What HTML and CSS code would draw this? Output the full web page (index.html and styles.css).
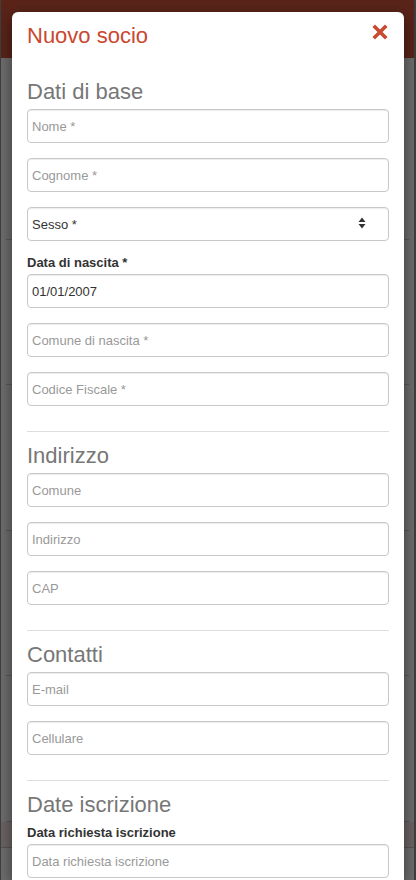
FILE: index.html
```html
<!DOCTYPE html>
<html lang="it">
<head>
<meta charset="utf-8">
<title>Nuovo socio</title>
<link rel="stylesheet" href="styles.css">
</head>
<body>
<div class="page">
  <div class="page-header"></div>
  <div class="bg-row bg-row-1"></div>
  <div class="bg-row bg-row-2"></div>
  <div class="bg-row bg-row-3"></div>
  <div class="bg-row bg-row-2"></div>
  <div class="bg-row bg-row-3"></div>
  <div class="bg-row bg-row-brown"></div>
</div>

<div class="modal">
  <div class="modal-header">
    <h4 class="modal-title">Nuovo socio</h4>
    <button class="close" type="button" aria-label="Chiudi">
      <svg width="16" height="16" viewBox="0 0 16 16" aria-hidden="true">
        <path d="M3 3 L13 13 M13 3 L3 13" stroke="#c94a33" stroke-width="3.6" stroke-linecap="square" fill="none"/>
      </svg>
    </button>
  </div>
  <div class="modal-body">
    <h3 class="section-title">Dati di base</h3>
    <div class="form-group"><input class="form-control" type="text" placeholder="Nome *"></div>
    <div class="form-group"><input class="form-control" type="text" placeholder="Cognome *"></div>
    <div class="form-group">
      <div class="select-wrap">
        <select class="form-control select">
          <option>Sesso *</option>
          <option>M</option>
          <option>F</option>
        </select>
        <svg class="select-arrow" width="8" height="12" viewBox="0 0 8 12" aria-hidden="true">
          <path d="M0.5 5 L4 0.5 L7.5 5 Z M0.5 7 L7.5 7 L4 11.5 Z" fill="#333"/>
        </svg>
      </div>
    </div>
    <div class="form-group">
      <label class="control-label">Data di nascita *</label>
      <input class="form-control" type="text" value="01/01/2007">
    </div>
    <div class="form-group"><input class="form-control" type="text" placeholder="Comune di nascita *"></div>
    <div class="form-group"><input class="form-control" type="text" placeholder="Codice Fiscale *"></div>

    <hr class="divider">
    <h3 class="section-title">Indirizzo</h3>
    <div class="form-group"><input class="form-control" type="text" placeholder="Comune"></div>
    <div class="form-group"><input class="form-control" type="text" placeholder="Indirizzo"></div>
    <div class="form-group"><input class="form-control" type="text" placeholder="CAP"></div>

    <hr class="divider">
    <h3 class="section-title">Contatti</h3>
    <div class="form-group"><input class="form-control" type="text" placeholder="E-mail"></div>
    <div class="form-group"><input class="form-control" type="text" placeholder="Cellulare"></div>

    <hr class="divider">
    <h3 class="section-title">Date iscrizione</h3>
    <div class="form-group form-group-first">
      <label class="control-label">Data richiesta iscrizione</label>
      <input class="form-control" type="text" placeholder="Data richiesta iscrizione">
    </div>
  </div>
</div>
</body>
</html>
```
FILE: styles.css
```css
html, body {
  margin: 0;
  padding: 0;
}

body {
  width: 416px;
  height: 880px;
  overflow: hidden;
  position: relative;
  background: #6c6c6c;
  font-family: "Liberation Sans", Arial, sans-serif;
}

/* dimmed page behind the modal */
.page {
  height: 880px;
  box-sizing: border-box;
  border-left: 1px solid #3f3f3f;
  border-right: 2px solid #3f3f3f;
  background: #6d6d6d;
}

.page-header {
  height: 58px;
  background: #5a2419;
}

.bg-row {
  margin: 0 5px;
  box-sizing: border-box;
  border-bottom: 1px solid #575757;
}

.bg-row-1 { height: 182px; }
.bg-row-2 { height: 145px; }
.bg-row-3 { height: 146px; }

.bg-row-brown {
  margin: 0;
  height: 26px;
  background: #6c6464;
  border-bottom: 1px solid #555;
}

/* modal */
.modal {
  position: absolute;
  top: 12px;
  left: 12px;
  width: 392px;
  height: 868px;
  overflow: hidden;
  background: #fff;
  border-radius: 6px 6px 0 0;
  box-shadow: 0 5px 15px rgba(0, 0, 0, 0.5);
}

.modal-header {
  display: flex;
  justify-content: space-between;
  align-items: flex-start;
  padding: 12px 16px 0 15px;
}

.modal-title {
  margin: 0;
  font-size: 22px;
  line-height: 24px;
  font-weight: normal;
  color: #c9482f;
}

.close {
  margin: 0;
  padding: 0;
  border: 0;
  background: none;
  width: 16px;
  height: 16px;
}

.close svg {
  display: block;
}

.modal-body {
  padding: 32px 15px 0;
}

.section-title {
  margin: 0 0 5px;
  font-size: 22px;
  line-height: 24px;
  font-weight: normal;
  color: #777;
}

.form-group {
  margin-bottom: 15px;
}

.form-group-first {
  margin-top: 9px;
}

.control-label {
  display: block;
  margin-bottom: 5px;
  font-size: 13px;
  line-height: 13px;
  font-weight: bold;
  color: #333;
}

.form-control {
  display: block;
  width: 100%;
  height: 34px;
  box-sizing: border-box;
  margin: 0;
  padding: 0 4px;
  border: 1px solid #c8c8c8;
  border-radius: 4px;
  background: #fff;
  box-shadow: inset 0 1px 1px rgba(0, 0, 0, 0.075);
  font-family: "Liberation Sans", Arial, sans-serif;
  font-size: 13px;
  color: #333;
  outline: none;
}

.form-control::placeholder {
  color: #999;
  opacity: 1;
}

.select-wrap {
  position: relative;
}

.select {
  -webkit-appearance: none;
  appearance: none;
}

.select-arrow {
  position: absolute;
  right: 23px;
  top: 10px;
  pointer-events: none;
}

.divider {
  margin: 25px 0 12px;
  border: 0;
  border-top: 1px solid #ddd;
  height: 0;
}
```
